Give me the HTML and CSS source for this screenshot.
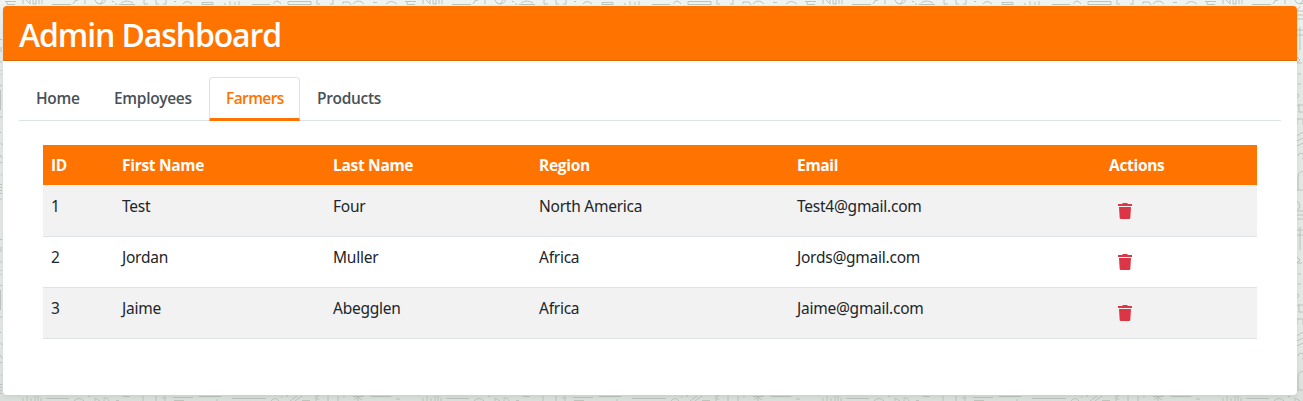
FILE: index.html
```html
<!DOCTYPE html>
<html lang="en">
<head>
<meta charset="utf-8">
<title>Admin Dashboard</title>
<link rel="stylesheet" href="styles.css">
</head>
<body>
<svg class="backdrop" width="1303" height="401" aria-hidden="true">
  <defs>
    <pattern id="top" width="400" height="6" patternUnits="userSpaceOnUse">
      <path d="M5 1.5h11M7 4.5h8M7 1v3M23 0v4M26 0l4 4V0M33 0v4h3V0M39 0v4M42 0v4M52 4.5h19M73 4q1-4 5-4M85 0v4M95 0q1 4 5 4t6-4M100 4l3-4M112 1.500h2M115 4h2M119 4.500h16M121 3q5-4 12 0M144 0v4h4M156 0v4h3M166 0v4h-3M174 1.500h2M183 4q4-5 9 0M202 2.500h11v2h-11zM225 3v2M230 1v4M235 2v3M239 1v4M252 4.500h18M273 4q4-6 8 0M288 1.500h23v3h-23zM317 0v4h3M333 0v4h-3M343 4v-2h6l2 3M353 4q5-6 11 0M373 2.500h4M386 4q5-5 11 0"/>
    </pattern>
    <pattern id="bottom" y="395" width="400" height="6" patternUnits="userSpaceOnUse">
      <path d="M23 3v3M27 1v5M31 3v3M35 1v5M38 1v5M41 3v3M46 3.500h23M74 6q5-5 10 0M88 1.500h2M95 6V3l5 3M104 6V3q5 0 5 3M116 5.500h3M123 1.500h7M143 1v5M156 1v5M165 1v5M162 3h3M173 2.500h20M174 5.500h10M199 1.500h22M216 5h2M232 3.500h34M271 6q4-5 8 0M281 2h2M286 1h2M290 6l7-5M295 6l7-5M302 5.500h8M319 1h-3v5M316 4h3M328 1v5M338 1v5M343 2h2M353 1.500h11M358 2v4M354 5l4-3 4 3M371 1.500h20M396 4h5"/>
    </pattern>
    <pattern id="side" width="8" height="200" patternUnits="userSpaceOnUse">
      <path d="M1 1q6 6 0 9M1 11h7M1 15h6M1 19h6M0 30h8M1 35h7M4 27v23M1 57l3 3-3 3h5M2 74h3M2 84h3M1 94q4 1 0 4M0 105h8M3 105v7h5M1 124v-5h6v6M1 136l6-4M1 141l6-3M1 146l6-3M2 156a3 3 0 1 1 4 3M2 190v-14q2-6 6-4M1 190h7"/>
    </pattern>
    <pattern id="left" width="3" height="200" patternUnits="userSpaceOnUse">
      <path d="M0 39.500h2M1 47v5M1 61v2M1 70v1M1 74v1M0 85.500h2M.5 90v20M1 116v2M0 132.500h1M1 143l1 2M0 155l2 3M0 162.500h2M1 175h1M0 184.500h2M0 187.500h2M0 190.500h2M0 193.500h2M1 198v2"/>
    </pattern>
  </defs>
  <g class="backdrop-tiles">
    <rect width="1303" height="6" fill="url(#top)"/>
    <rect y="395" width="1303" height="6" fill="url(#bottom)"/>
    <rect y="6" width="3" height="389" fill="url(#left)"/>
    <rect x="1297" y="6" width="6" height="389" fill="url(#side)"/>
  </g>
</svg>
<main class="card">
  <header class="card-header"><h2 class="title">Admin Dashboard</h2></header>
  <div class="card-body">
    <nav class="tabs">
      <a class="tab tab-home">Home</a>
      <a class="tab tab-employees">Employees</a>
      <a class="tab tab-farmers active">Farmers</a>
      <a class="tab tab-products">Products</a>
    </nav>
    <section class="pane">
      <table class="table">
        <colgroup><col class="c-id"><col class="c-first"><col class="c-last"><col class="c-region"><col class="c-email"><col class="c-actions"></colgroup>
        <thead>
          <tr><th>ID</th><th>First Name</th><th>Last Name</th><th>Region</th><th>Email</th><th>Actions</th></tr>
        </thead>
        <tbody>
          <tr><td>1</td><td>Test</td><td>Four</td><td>North America</td><td>Test4@gmail.com</td><td class="actions"><svg class="trash" viewBox="0 0 14 16"><path d="M0 1h4l1-1h4l1 1h4v2H0zM1 4h12l-.7 11q-.1 1-1.300 1H3q-1.200 0-1.300-1z"/></svg></td></tr>
          <tr><td>2</td><td>Jordan</td><td>Muller</td><td>Africa</td><td>Jords@gmail.com</td><td class="actions"><svg class="trash" viewBox="0 0 14 16"><path d="M0 1h4l1-1h4l1 1h4v2H0zM1 4h12l-.7 11q-.1 1-1.300 1H3q-1.200 0-1.300-1z"/></svg></td></tr>
          <tr><td>3</td><td>Jaime</td><td>Abegglen</td><td>Africa</td><td>Jaime@gmail.com</td><td class="actions"><svg class="trash" viewBox="0 0 14 16"><path d="M0 1h4l1-1h4l1 1h4v2H0zM1 4h12l-.7 11q-.1 1-1.300 1H3q-1.200 0-1.300-1z"/></svg></td></tr>
        </tbody>
      </table>
    </section>
  </div>
</main>
</body>
</html>
```
FILE: styles.css
```css
* { box-sizing: border-box; }
body {
  margin: 0;
  height: 401px;
  padding: 6px 6px 6px 3px;
  overflow: hidden;
  background: linear-gradient(#eff4f0, #e3e8e5 20%, #e3e8e5 85%, #d9dfda);
  color: #212529;
  font-family: "Noto Sans", "Open Sans", sans-serif;
  font-size: 15.5px;
  line-height: 24px;
  letter-spacing: -.25px;
}
.backdrop { position: absolute; left: 0; top: 0; }
.backdrop path { fill: none; stroke: #bcc4be; stroke-width: 1; }
.card {
  position: relative;
  height: 389px;
  background: #fff;
  border-radius: 4px;
  box-shadow: 0 2px 4px rgba(0, 0, 0, .075);
  overflow: hidden;
}
.card-header {
  height: 55px;
  padding: 10px 16px 0;
  background: #ff7300;
  border-bottom: 1px solid #da6606;
}
.title {
  margin: 0;
  color: #fff;
  font-family: "Open Sans", sans-serif;
  font-size: 32px;
  font-weight: 600;
  line-height: 38px;
  letter-spacing: -1.12px;
}
.card-body { padding: 16px; }
.tabs {
  display: flex;
  height: 44px;
  border-bottom: 1px solid #dee2e6;
}
.tab {
  height: 44px;
  padding: 8px 0 0 16px;
  border: 1px solid transparent;
  border-radius: 4px 4px 0 0;
  color: #495057;
  font-family: "Open Sans", sans-serif;
  font-weight: 600;
  letter-spacing: -.32px;
  white-space: nowrap;
}
.tab-home { width: 78px; }
.tab-employees { width: 112px; }
.tab-farmers { width: 91px; letter-spacing: -.6px; }
.tab-products { width: 97px; }
.tab.active {
  background: #fff;
  color: #ff7300;
  border-color: #dee2e6;
  border-bottom: 3px solid #ff7300;
}
.pane { padding: 24px; }
.table {
  width: 1214px;
  table-layout: fixed;
  border-collapse: separate;
  border-spacing: 0;
}
.c-id { width: 71px; }
.c-first { width: 211px; }
.c-last { width: 206px; }
.c-region { width: 258px; }
.c-email { width: 312px; }
.c-actions { width: 156px; }
th {
  height: 40px;
  padding: 8px;
  background: #ff7300;
  color: #fff;
  font-family: "Open Sans", sans-serif;
  font-weight: 700;
  letter-spacing: -.3px;
  text-align: left;
}
td {
  height: 51px;
  padding: 8px 8px 8px;
  border-bottom: 1px solid #dee2e6;
  vertical-align: top;
}
tbody tr:first-child td { height: 52px; padding-top: 9px; }
tbody tr:nth-child(odd) { background: #f2f2f2; }
td.actions { padding-left: 17px; }
.trash { display: block; width: 14px; height: 16px; margin-top: 9px; fill: #dc3545; }
```
